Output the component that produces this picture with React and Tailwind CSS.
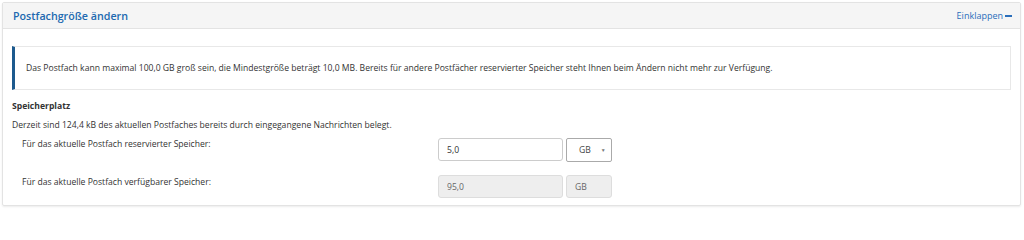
import React from "react";

const App = () => {
  return (
    <div className="w-[1024px] h-[210px] bg-white p-[2px] pr-[3px] font-['Open_Sans',sans-serif] text-[8.6px] leading-[12px] text-[#333]">
      <div className="border border-[#e3e3e3] rounded-[2px] shadow-[0_1px_2px_rgba(0,0,0,0.08)] h-[204px]">
        <div className="h-[26px] bg-[#f5f5f5] border-b border-[#e3e3e3] flex items-center justify-between pl-[10px] pr-[8px]">
          <h3 className="text-[10.7px] font-semibold text-[#2169b0]">Postfachgröße ändern</h3>
          <button className="text-[9px] text-[#2a6ebb] flex items-center gap-[2px]">
            Einklappen
            <span className="inline-block w-[7px] h-[2px] bg-[#2a6ebb]" />
          </button>
        </div>
        <div className="px-[9px] pt-[17px]">
          <div className="border border-[#e8e8e8] border-l-[3px] border-l-[#1d5a8e] h-[44px] flex items-center pl-[11px]">
            Das Postfach kann maximal 100,0 GB groß sein, die Mindestgröße beträgt 10,0 MB. Bereits für andere Postfächer reservierter Speicher steht Ihnen beim Ändern nicht mehr zur Verfügung.
          </div>
          <h4 className="font-bold mt-[10px]">Speicherplatz</h4>
          <p className="mt-[7px]">Derzeit sind 124,4 kB des aktuellen Postfaches bereits durch eingegangene Nachrichten belegt.</p>
          <div className="flex items-start mt-[7px]">
            <label className="w-[426px] pl-[10px]">Für das aktuelle Postfach reservierter Speicher:</label>
            <input
              readOnly
              value="5,0"
              className="w-[125px] h-[23px] border border-[#ccc] rounded-[3px] px-[8px] outline-none"
            />
            <button className="ml-[3px] w-[46px] h-[24px] border border-[#aaa] rounded-[2px] flex items-center pl-[12px] gap-[10px] text-[#444]">
              GB
              <span className="text-[5px] text-[#777]">▼</span>
            </button>
          </div>
          <div className="flex items-start mt-[13px]">
            <label className="w-[426px] pl-[10px] pt-[1px]">Für das aktuelle Postfach verfügbarer Speicher:</label>
            <input
              readOnly
              value="95,0"
              className="w-[125px] h-[23px] border border-[#ddd] bg-[#eee] rounded-[3px] px-[8px] outline-none text-[#666]"
            />
            <div className="ml-[3px] w-[46px] h-[23px] border border-[#ddd] bg-[#eee] rounded-[3px] flex items-center pl-[8px] text-[#666]">
              GB
            </div>
          </div>
        </div>
      </div>
    </div>
  );
};

export default App;
